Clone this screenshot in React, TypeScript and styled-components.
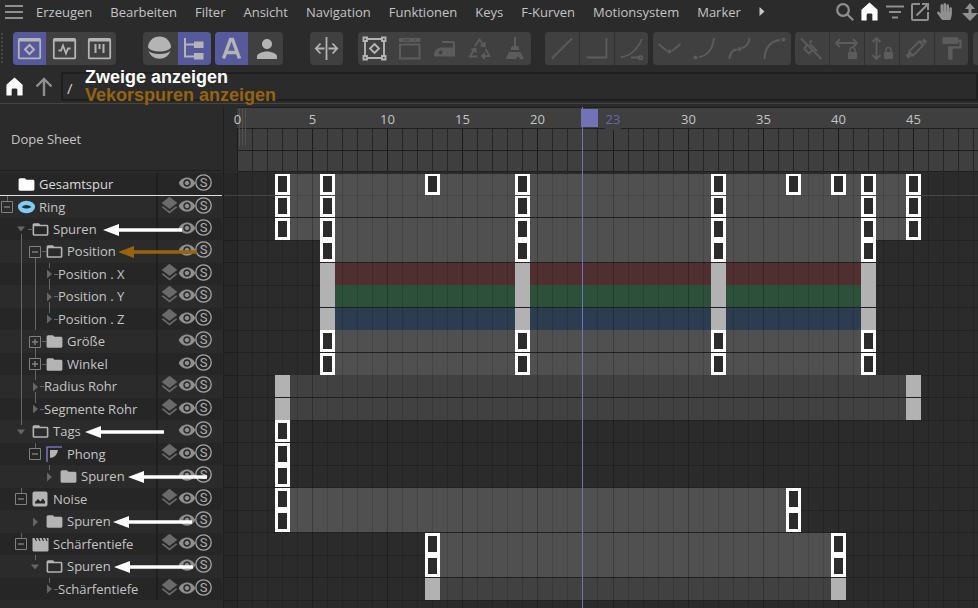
import React from "react";
import styled, { createGlobalStyle, css } from "styled-components";
import {
  MdOpenInNew,
  MdVisibility,
  MdLayers,
  MdFolder,
  MdFolderOpen,
  MdFormatPaint,
  MdPerson,
} from "react-icons/md";
import { FaHandPaper } from "react-icons/fa";

const color = {
  bg: "#2b2b2b",
  rowDark: "#262626",
  line: "#1f1f1f",
  text: "#c4c4c4",
  icon: "#b4b4b4",
  muted: "#8f8f8f",
  guide: "#666666",
  group: "#404040",
  active: "#565a9c",
  disabled: "#5c5c5c",
  play: "#7073b5",
};

const GlobalStyle = createGlobalStyle`
  * { box-sizing: border-box; }
  html, body { margin: 0; background: ${color.bg}; }
  body {
    font-family: "Open Sans", "Noto Sans", sans-serif;
    font-size: 13px;
    color: ${color.text};
    overflow: hidden;
  }
  button { font: inherit; color: inherit; background: none; border: 0; padding: 0; }
  svg { display: block; flex: none; }
`;

const Page = styled.main`
  display: flex;
  flex-direction: column;
  min-height: 100vh;
  overflow: hidden;
`;

/* ---------- menu bar ---------- */

const MenuBar = styled.nav`
  display: flex;
  align-items: center;
  height: 23px;
  padding-left: 5px;
  overflow: hidden;
`;
const MenuItems = styled.div`
  display: flex;
  flex: 1;
  gap: 18px;
  align-items: center;
  margin-left: 13px;
`;
const MenuButton = styled.button`
  line-height: 20px;
  white-space: nowrap;
`;
const CornerTools = styled.div`
  display: flex;
  flex: none;
  width: 146px;
`;
const CornerButton = styled.button<{ $bright?: boolean }>`
  flex: none;
  display: flex;
  align-items: center;
  justify-content: center;
  width: 25px;
  height: 22px;
  color: ${(p) => (p.$bright ? "#ffffff" : color.muted)};
`;

/* ---------- tool bar ---------- */

const ToolBar = styled.div`
  display: flex;
  height: 49px;
  padding-top: 9px;
  overflow: hidden;
`;
const Handle = styled.div`
  flex: none;
  width: 5px;
  height: 33px;
  margin-right: 8px;
  background: radial-gradient(circle, #4a4a4a 1px, transparent 1px) 0 0 / 4px 4px;
`;
const ToolGroup = styled.div<{ $gap: number; $split?: boolean }>`
  flex: none;
  display: flex;
  gap: 2px;
  height: 33px;
  margin-right: ${(p) => p.$gap}px;
  background: ${color.group};
  border-radius: 4px;
  overflow: hidden;
  ${(p) =>
    p.$split &&
    css`
      button + button { box-shadow: -1px 0 0 #303030; }
    `}
`;
const ToolButton = styled.button<{ $state: "on" | "off" | "disabled" }>`
  display: flex;
  align-items: center;
  justify-content: center;
  width: 33px;
  height: 33px;
  color: ${(p) => (p.$state === "disabled" ? color.disabled : color.icon)};
  background: ${(p) => (p.$state === "on" ? color.active : "transparent")};
`;

/* ---------- path bar ---------- */

const PathBar = styled.div`
  display: flex;
  align-items: center;
  height: 29px;
`;
const PathButton = styled.button<{ $bright?: boolean }>`
  display: flex;
  align-items: center;
  justify-content: center;
  width: 29px;
  height: 29px;
  color: ${(p) => (p.$bright ? "#ffffff" : color.muted)};
`;
const PathInput = styled.input`
  flex: 1;
  min-width: 0;
  height: 29px;
  margin-left: 3px;
  padding: 2px 4px 0;
  border: 2px solid ${color.line};
  background: ${color.bg};
  color: #d0d0d0;
  font-family: inherit;
  font-size: 15px;
`;
const Notes = styled.div`
  position: absolute;
  left: 85px;
  top: 68px;
  pointer-events: none;
  font: bold 18px/18px "Liberation Sans", Arial, sans-serif;
`;
const NoteLine = styled.div<{ $vector?: boolean }>`
  color: ${(p) => (p.$vector ? "#96640f" : "#ffffff")};
`;

/* ---------- workspace ---------- */

const Workspace = styled.div`
  flex: 1;
  display: flex;
  margin-top: 2px;
  border-top: 1px solid #454545;
`;
const Tree = styled.section`
  flex: none;
  width: 222px;
`;
const TreeTitle = styled.h1`
  display: flex;
  align-items: center;
  height: 67px;
  margin: 0 0 2px;
  padding: 3px 0 0 11px;
  border-bottom: 1px solid ${color.line};
  font-size: 13px;
  font-weight: 400;
`;
const Divider = styled.div`
  flex: none;
  width: 2px;
  margin-top: 3px;
  border-left: 1px solid ${color.bg};
  background: ${color.line};
`;

/* Two neighbouring rows share 45 pixels; the first pair starts with the taller one. */
const rowHeight = (n: number) => {
  if (n === 0) return 23;
  return n > 1 && n % 2 ? 23 : 22;
};

const TreeRow = styled.div<{ $n: number }>`
  position: relative;
  display: flex;
  height: ${(p) => rowHeight(p.$n)}px;
  background: ${(p) => (p.$n % 2 ? color.bg : color.rowDark)};
  ${(p) => p.$n === 0 && "border-bottom: 1px solid #e0e0e0;"}
`;
const NameCell = styled.div`
  display: flex;
  flex: 1;
  align-items: center;
`;
const Guide = styled.span<{ $line: string }>`
  flex: none;
  align-self: stretch;
  display: flex;
  align-items: center;
  justify-content: center;
  width: 14px;
  background-image: ${(p) =>
      p.$line === "full" || p.$line === "top" || p.$line === "both"
        ? `linear-gradient(${color.guide}, ${color.guide})`
        : "none"},
    ${(p) => (p.$line === "bottom" || p.$line === "both" ? `linear-gradient(${color.guide}, ${color.guide})` : "none")};
  background-position: 7px 0, 7px 100%;
  background-size: 1px ${(p) => (p.$line === "full" ? "100%" : "5px")}, 1px 6px;
  background-repeat: no-repeat;
`;
const Twisty = styled.button`
  display: flex;
  align-items: center;
  justify-content: center;
  width: 14px;
  height: 22px;
  color: ${color.guide};
`;
const Dash = styled.span<{ $on?: boolean; $leaf?: boolean }>`
  flex: none;
  width: 4px;
  height: 1px;
  margin-left: ${(p) => (p.$leaf ? "-2px" : "0")};
  background: ${(p) => (p.$on ? color.guide : "transparent")};
`;
const IconSlot = styled.span`
  flex: none;
  display: flex;
  justify-content: center;
  width: 16px;
  margin-right: 5px;
  color: ${color.icon};
`;
const Name = styled.span<{ $bright?: boolean }>`
  line-height: 18px;
  padding-bottom: 1px;
  white-space: nowrap;
  color: ${(p) => (p.$bright ? "#dcdcdc" : color.text)};
`;
const Switches = styled.div`
  flex: none;
  display: flex;
  justify-content: flex-end;
  width: 66px;
  padding-right: 10px;
  border-left: 2px solid ${color.line};
`;
const Switch = styled.button`
  display: flex;
  align-items: center;
  justify-content: center;
  width: 17px;
  height: 19px;
  color: ${color.muted};
`;
const ArrowMark = styled.svg<{ $left: number }>`
  position: absolute;
  left: ${(p) => p.$left}px;
  top: 5px;
  pointer-events: none;
`;

/* ---------- timeline ---------- */

const Timeline = styled.section`
  position: relative;
  flex: 1;
  min-width: 0;
  overflow: hidden;
  padding-top: 3px;
`;
const frameLines = (ink: string) => css`
  background-image: repeating-linear-gradient(90deg, ${ink} 0 1px, transparent 1px 15px),
    repeating-linear-gradient(90deg, ${ink} 0 1px, transparent 1px 15px),
    repeating-linear-gradient(90deg, ${ink} 0 1px, transparent 1px 75px),
    repeating-linear-gradient(90deg, ${ink} 0 1px, transparent 1px 75px);
  background-size: 375px 100%, 100% 100%, 375px 100%, 100% 100%;
  background-repeat: no-repeat;
`;
const Ruler = styled.div`
  position: relative;
  height: 65px;
  margin-left: 13px;
  border-top: 1px solid ${color.line};
  border-bottom: 1px solid ${color.line};
  background: #3f3f3f;
`;
const RulerLabels = styled.div`
  position: relative;
  z-index: 1;
  display: grid;
  grid-template-columns: repeat(5, 75px) 76px repeat(20, 75px);
  height: 20px;
  margin-left: -37px;
`;
const RulerLabel = styled.span<{ $col: number }>`
  grid-column: ${(p) => p.$col};
  grid-row: 1;
  text-align: center;
  line-height: 22px;
`;
const NowLabel = styled(RulerLabel)`
  justify-self: center;
  width: 16px;
  background: #3f3f3f;
  color: #6568ad;
`;
const RulerTicks = styled.div`
  height: 43px;
  border-top: 1px solid ${color.line};
  ${frameLines("rgba(20,20,20,0.62)")}
  background-position: 0 0, 376px 0, 0 0, 376px 0;
`;
const RulerMid = styled.div`
  height: 22px;
  border-bottom: 1px solid ${color.line};
`;
const Grip = styled.div`
  position: absolute;
  left: 2px;
  top: 0;
  width: 7px;
  height: 38px;
  background: repeating-linear-gradient(90deg, #505050 0 1px, transparent 1px 3px);
`;
const Lanes = styled.div`
  position: relative;
  margin-top: 1px;
  min-height: 435px;
`;
const LaneGrid = styled.div`
  position: absolute;
  inset: 0;
  pointer-events: none;
  ${frameLines("rgba(0,0,0,0.14)")}
  background-position: 13px 0, 389px 0, 13px 0, 389px 0;
`;
const LaneMargin = styled.div`
  position: absolute;
  inset: 0 auto 0 0;
  width: 13px;
  background: rgba(0, 0, 0, 0.08);
`;
const Lane = styled.div<{ $n: number }>`
  display: grid;
  grid-template-columns: repeat(24, 15px) 16px repeat(75, 15px);
  height: ${(p) => rowHeight(p.$n)}px;
  padding-left: 6px;
  ${(p) => p.$n === 0 && "padding-top: 1px;"}
  border-bottom: ${(p) => (p.$n === 0 ? "1px solid #484848" : p.$n % 2 ? "1px solid #212121" : "0")};
  box-shadow: ${(p) => (p.$n % 2 === 0 && p.$n > 0 ? "0 1px 0 rgba(0,0,0,0.2)" : "none")};
`;
const Span = styled.div<{ $from: number; $to: number; $fill: string }>`
  grid-row: 1;
  grid-column: ${(p) => p.$from + 1} / ${(p) => p.$to + 2};
  background: ${(p) => p.$fill};
`;
const Key = styled.div<{ $at: number; $solid?: boolean; $first?: boolean }>`
  position: relative;
  z-index: 1;
  grid-row: 1;
  grid-column: ${(p) => p.$at + 1};
  width: 15px;
  ${(p) =>
    p.$solid
      ? css`
          background: #b2b2b2;
        `
      : css`
          background: ${color.bg};
          border: 3px solid #ffffff;
          border-top-width: ${p.$first ? 2 : 3}px;
        `}
`;
const Playhead = styled.div`
  position: absolute;
  z-index: 2;
  left: 358px;
  top: 3px;
  bottom: 0;
  width: 1px;
  background: ${color.play};
`;
const PlayheadGrip = styled.div`
  position: absolute;
  left: -1px;
  top: 2px;
  width: 17px;
  height: 18px;
  background: ${color.play};
`;

/* ---------- drawings ---------- */

const HomeIcon = ({ size = 20 }: { size?: number }) => (
  <svg width={size} height={size} viewBox="0 0 20 20" fill="currentColor">
    <path d="M10 0.500 18.500 8.200V19.500H13V13.500Q13 12 11.500 12H8.500Q7 12 7 13.500V19.500H1.500V8.200Z" />
  </svg>
);
const Draw = ({ children, w = 1.8 }: { children: React.ReactNode; w?: number }) => (
  <svg width="25" height="25" viewBox="0 0 25 25" fill="none" stroke="currentColor" strokeWidth={w}>
    {children}
  </svg>
);
const Panel = ({ children }: { children: React.ReactNode }) => (
  <Draw>
    <rect x="1.800" y="2.800" width="21.400" height="19.600" rx="1" />
    <path d="M2 4.200H23" strokeWidth="2.400" />
    {children}
  </Draw>
);
const Lock = ({ x }: { x: number }) => (
  <g>
    <rect x={x} y="16" width="9" height="7" rx="1" fill="currentColor" stroke="none" />
    <path d={`M${x + 2} 17V14a2.500 2.500 0 0 1 5 0V17`} strokeWidth="1.500" />
  </g>
);

const icons = {
  dope: <Panel><path d="M12.500 9 17 13.500 12.500 18 8 13.500Z" strokeWidth="2" /></Panel>,
  curve: <Panel><path d="M6.500 14.500H9L11 9.500 14 17.500 16 12.500H18.500" /></Panel>,
  motion: <Panel><path d="M8.500 8V17M12.500 8V13M16.500 8V17" strokeWidth="2" /></Panel>,
  ball: (
    <Draw w={0}>
      <path d="M1 11.500a11.500 11 0 0 1 23 0Q21 15.500 12.500 15.500T1 11.500Z" fill="currentColor" />
      <path d="M1.500 15Q5 18 12.500 18T23.500 15A11.500 11 0 0 1 1.500 15Z" fill="currentColor" />
    </Draw>
  ),
  tree: (
    <Draw w={2}>
      <path d="M3 2V20.500H13M3 8.500H13" />
      <path d="M12 5.500H21.500V12H12ZM12 17H21.500V23.500H12Z" fill="currentColor" stroke="none" />
    </Draw>
  ),
  letter: (
    <Draw w={3.4}>
      <path d="M4.500 22.500 11.500 3.500H13.500L20.500 22.500M7 16.500H18" />
    </Draw>
  ),
  person: <MdPerson size={30} />,
  fit: (
    <Draw>
      <path d="M12.500 1V24M1.500 12.500H10.500M14.500 12.500H23.500M6.500 7.500 1.800 12.500 6.500 17.500M18.500 7.500 23.200 12.500 18.500 17.500" />
    </Draw>
  ),
  frame: (
    <Draw w={1.9}>
      <path d="M5 3H20M5 22H20M3 5V20M22 5V20M12.500 8 17 12.500 12.500 17 8 12.500Z" />
      <path d="M1.500 1.500h3.500v3.500h-3.500zM20 1.500h3.500v3.500h-3.500zM1.500 20h3.500v3.500h-3.500zM20 20h3.500v3.500h-3.500z" fill={color.group} />
    </Draw>
  ),
  oven: (
    <Draw w={2}>
      <path d="M3 8.500H22.500V22.500H3Z" />
      <path d="M2 4H23.500" strokeWidth="4" />
      <path d="M6 4H12M17 4h2" stroke={color.group} strokeWidth="1" />
    </Draw>
  ),
  iron: (
    <Draw w={2}>
      <path d="M10 6H20.500Q22 6 22 8V13" />
      <path d="M2 20.500V18Q3 11.500 10 11.500H23V20.500ZM8.500 14.500a2 2 0 1 0 0.100 0Z" fill="currentColor" fillRule="evenodd" stroke="none" />
    </Draw>
  ),
  recycle: (
    <Draw>
      <path d="M8 10 12.500 3.500 16 9M18.500 13 22.500 20H16M10.500 20.500H3L7 13.500" />
      <path d="M18.500 5.500V11.500L12.500 10ZM18 16V24L13.500 20ZM3 13 9.500 11.500 9.500 17.500Z" fill="currentColor" stroke="none" />
    </Draw>
  ),
  broom: (
    <Draw w={2}>
      <path d="M13 1V11" />
      <path d="M9 12Q9 10 11 10H15Q17 10 17 12V14H9ZM7 16H18.500L22 23H18L16 20 14 23H3.500Z" fill="currentColor" stroke="none" />
    </Draw>
  ),
  linear: <Draw><path d="M3 22.500 23 2.500" /></Draw>,
  step: <Draw><path d="M2.500 21.500H22.500V2" /></Draw>,
  spline: <Draw><path d="M2 21C12 20 18 14 23 3M12 21.500H20" /><circle cx="21.500" cy="21.500" r="1.700" /></Draw>,
  autoTangent: (
    <Draw><path d="M1.500 8 10 15M15 15 23.500 8" /><circle cx="12.500" cy="15.500" r="2" fill="currentColor" stroke="none" /></Draw>
  ),
  easeIn: (
    <Draw w={2}><path d="M22 2Q20 19 7 21" /><circle cx="3.500" cy="21.500" r="2" fill="currentColor" stroke="none" /></Draw>
  ),
  easeBoth: (
    <Draw w={2}><path d="M2.500 23Q3 14 10 13.500M15 12Q22 10 22.500 2" /><circle cx="12.500" cy="13" r="2" fill="currentColor" stroke="none" /></Draw>
  ),
  easeOut: (
    <Draw w={2}><path d="M2.500 23Q3 6 18 4" /><circle cx="21.500" cy="3.500" r="2" fill="currentColor" stroke="none" /></Draw>
  ),
  breakTangent: (
    <Draw><path d="M2 2.500 22.500 23M10.500 7 13 4.500M5 12.500 8 9.500M5 12.500 10 17.500 14 13.500M11 8 18 15" /></Draw>
  ),
  lockTime: (
    <Draw><path d="M2 7H23M6 3 2 7 6 11M19 3 23 7 19 11" /><Lock x={14} /></Draw>
  ),
  lockValue: (
    <Draw><path d="M7.500 2V23M3.500 6 7.500 2 11.500 6M3.500 19 7.500 23 11.500 19" /><Lock x={15} /></Draw>
  ),
  cycle: (
    <Draw><path d="M3 19.500H9L19 9.500 15 5.500 5 15.500 9 19.500M15 5.500H22M19.500 3 22 5.500 19.500 8M5.500 17 3 19.500 5.500 22" /></Draw>
  ),
  paint: <MdFormatPaint size={27} />,
};

type ToolName = keyof typeof icons;
type ToolState = "on" | "off" | "disabled";
interface Group {
  gap: number;
  split?: boolean;
  tools: [ToolName, string, ToolState][];
}

const groups: Group[] = [
  { gap: 27, tools: [["dope", "Dope Sheet", "on"], ["curve", "F-Kurven", "off"], ["motion", "Motion", "off"]] },
  { gap: 4, tools: [["ball", "Objekte", "off"], ["tree", "Zweige anzeigen", "on"]] },
  { gap: 27, tools: [["letter", "Automatik", "on"], ["person", "Figur", "off"]] },
  { gap: 15, tools: [["fit", "Verschieben", "off"]] },
  {
    gap: 14,
    tools: [
      ["frame", "Rahmen", "off"],
      ["oven", "Backen", "disabled"],
      ["iron", "Bügeln", "disabled"],
      ["recycle", "Wiederverwenden", "disabled"],
      ["broom", "Aufräumen", "disabled"],
    ],
  },
  { gap: 5, split: true, tools: [["linear", "Linear", "disabled"], ["step", "Stufe", "disabled"], ["spline", "Spline", "disabled"]] },
  {
    gap: 4,
    tools: [
      ["autoTangent", "Auto-Tangente", "disabled"],
      ["easeIn", "Ease In", "disabled"],
      ["easeBoth", "Ease", "disabled"],
      ["easeOut", "Ease Out", "disabled"],
    ],
  },
  {
    gap: 5,
    split: true,
    tools: [
      ["breakTangent", "Tangente brechen", "disabled"],
      ["lockTime", "Zeit sperren", "disabled"],
      ["lockValue", "Wert sperren", "disabled"],
      ["cycle", "Schleife", "disabled"],
      ["paint", "Farbe", "disabled"],
    ],
  },
  { gap: 0, tools: [["step", "Weitere", "disabled"]] },
];

const RingIcon = () => (
  <svg width="17" height="14" viewBox="0 0 17 14">
    <ellipse cx="8.500" cy="7" rx="8.500" ry="6.200" fill="#7fcdf5" />
    <path d="M3.500 7Q8.500 3 13.500 7 8.500 10 3.500 7Z" fill="#20303a" />
  </svg>
);
const PhongIcon = () => (
  <svg width="16" height="16" viewBox="0 0 16 16">
    <path d="M1 16V1H16" fill="none" stroke="#7073b5" strokeWidth="1.600" />
    <path d="M4 4H12Q11 11 4 12Z" fill="currentColor" />
  </svg>
);
const NoiseIcon = () => (
  <svg width="16" height="16" viewBox="0 0 16 16">
    <rect x="0.500" y="0.500" width="15" height="15" rx="2" fill="currentColor" />
    <path d="M3 12.500V11L6 8 8.500 10.500 11 7.500 13 10.500V12.500Z" fill={color.rowDark} />
  </svg>
);
const ClapIcon = () => (
  <svg width="17" height="15" viewBox="0 0 17 15">
    <path d="M0.500 1H2.500L4 4H5L4 1H6L7.500 4H8.500L7.500 1H9.500L11 4H12L11 1H13L14.500 4H15.500L14.500 1H16.500V13Q16.500 14.500 15 14.500H2Q0.500 14.500 0.500 13Z" fill="currentColor" />
  </svg>
);
const Glyph = ({ kind }: { kind: string }) => {
  if (kind === "plus" || kind === "minus")
    return (
      <svg width="12" height="12" viewBox="0 0 12 12" fill="none" stroke="#808080">
        <path d="M0.500 0.500H11.500V11.500H0.500Z" />
        <path d={kind === "plus" ? "M3 6H9M6 3V9" : "M3 6H9"} strokeWidth="1.400" />
      </svg>
    );
  return (
    <svg width="10" height="10" viewBox="0 0 10 10" fill="currentColor">
      <path d={kind === "open" ? "M1 2.500H9L5 7.500Z" : "M3 0.500 8 5 3 9.500Z"} />
    </svg>
  );
};

const treeIcons: Record<string, React.ReactNode> = {
  folder: <MdFolder size={19} />,
  folderBright: <MdFolder size={19} color="#fff" />,
  folderOpen: <MdFolderOpen size={19} />,
  ring: <RingIcon />,
  phong: <PhongIcon />,
  noise: <NoiseIcon />,
  clap: <ClapIcon />,
};

/* ---------- data ---------- */

type Twist = "plus" | "minus" | "open" | "closed" | "";
interface Track {
  name: string;
  guides: string[];
  twist: Twist;
  own?: string;
  dash?: boolean;
  icon?: string;
  layer?: boolean;
  arrow?: number;
  vector?: boolean;
  keys: number[];
  fill?: string;
  solid?: boolean;
}

const grey = "#505050";
const dim = "#414141";
const all = [3, 6, 19, 32, 42, 45];
const four = [6, 19, 32, 42];

const tracks: Track[] = [
  { name: "Gesamtspur", guides: [], twist: "", icon: "folderBright", keys: [3, 6, 13, 19, 32, 37, 40, 42, 45], fill: grey },
  { name: "Ring", guides: [], twist: "minus", own: "top", icon: "ring", layer: true, keys: all, fill: grey },
  { name: "Spuren", guides: [""], twist: "open", own: "bottom", dash: true, icon: "folderOpen", arrow: 103, keys: all, fill: grey },
  { name: "Position", guides: ["", "full"], twist: "minus", own: "bottom", dash: true, icon: "folderOpen", arrow: 118, vector: true, keys: four, fill: grey },
  { name: "Position . X", guides: ["", "full", "full"], twist: "closed", own: "both", dash: true, layer: true, keys: four, fill: "#502f30", solid: true },
  { name: "Position . Y", guides: ["", "full", "full"], twist: "closed", own: "both", dash: true, layer: true, keys: four, fill: "#2c5039", solid: true },
  { name: "Position . Z", guides: ["", "full", "full"], twist: "closed", own: "top", dash: true, layer: true, keys: four, fill: "#2c3d50", solid: true },
  { name: "Größe", guides: ["", "full"], twist: "plus", own: "bottom", dash: true, icon: "folder", keys: four, fill: grey },
  { name: "Winkel", guides: ["", "full"], twist: "plus", own: "both", dash: true, icon: "folder", keys: four, fill: grey },
  { name: "Radius Rohr", guides: ["", "full"], twist: "closed", own: "both", dash: true, layer: true, keys: [3, 45], fill: dim, solid: true },
  { name: "Segmente Rohr", guides: ["", "full"], twist: "closed", own: "top", dash: true, layer: true, keys: [3, 45], fill: dim, solid: true },
  { name: "Tags", guides: [""], twist: "open", own: "top", icon: "folderOpen", arrow: 85, keys: [3] },
  { name: "Phong", guides: ["", ""], twist: "minus", own: "top", icon: "phong", layer: true, keys: [3] },
  { name: "Spuren", guides: ["", "", ""], twist: "closed", own: "top", icon: "folder", arrow: 128, keys: [3] },
  { name: "Noise", guides: [""], twist: "minus", own: "top", icon: "noise", layer: true, keys: [3, 37], fill: grey },
  { name: "Spuren", guides: ["", ""], twist: "closed", icon: "folder", arrow: 113, keys: [3, 37], fill: grey },
  { name: "Schärfentiefe", guides: [""], twist: "minus", own: "top", icon: "clap", layer: true, keys: [13, 40], fill: grey },
  { name: "Spuren", guides: ["", ""], twist: "open", own: "top", icon: "folderOpen", arrow: 114, keys: [13, 40], fill: grey },
  { name: "Schärfentiefe", guides: ["", "", ""], twist: "closed", own: "top", dash: true, layer: true, keys: [13, 40], fill: dim, solid: true },
];

const menu = ["Erzeugen", "Bearbeiten", "Filter", "Ansicht", "Navigation", "Funktionen", "Keys", "F-Kurven", "Motionsystem", "Marker"];

const Arrow = ({ left, vector }: { left: number; vector?: boolean }) => (
  <ArrowMark $left={left} width="80" height="14" viewBox="0 0 80 14" fill={vector ? "#96640f" : "#ffffff"}>
    <path d="M0 7 16 1V5.200H79V8.800H16V13Z" />
  </ArrowMark>
);

const TrackRow = ({ track, n }: { track: Track; n: number }) => (
  <TreeRow $n={n}>
    <NameCell>
      {track.guides.map((g, i) => (
        <Guide key={i} $line={g} />
      ))}
      <Guide $line={track.own ?? ""}>
        {track.twist && (
          <Twisty aria-label={`${track.name} auf- oder zuklappen`}>
            <Glyph kind={track.twist} />
          </Twisty>
        )}
      </Guide>
      <Dash $on={track.dash} $leaf={!track.icon} />
      {track.icon && <IconSlot>{treeIcons[track.icon]}</IconSlot>}
      <Name $bright={n === 0}>{track.name}</Name>
    </NameCell>
    <Switches>
      {track.layer && (
        <Switch aria-label="Ebene">
          <MdLayers size={21} color="#6a6a6a" />
        </Switch>
      )}
      <Switch aria-label="Sichtbar">
        <MdVisibility size={18} />
      </Switch>
      <Switch aria-label="Solo">
        <svg width="17" height="17" viewBox="0 0 17 17">
          <circle cx="8.500" cy="8.500" r="7.700" fill="none" stroke="#a6a6a6" strokeWidth="1.300" />
          <text x="8.500" y="13" textAnchor="middle" fontSize="13" fontFamily="Roboto, sans-serif" fill="#b0b0b0">S</text>
        </svg>
      </Switch>
    </Switches>
    {track.arrow !== undefined && <Arrow left={track.arrow} vector={track.vector} />}
  </TreeRow>
);

export default function App() {
  return (
    <Page>
      <GlobalStyle />
      <MenuBar>
        <MenuButton aria-label="Menü">
          <svg width="18" height="16" viewBox="0 0 18 16" stroke={color.muted} strokeWidth="2">
            <path d="M0 2H18M0 8H18M0 14H18" />
          </svg>
        </MenuButton>
        <MenuItems>
          {menu.map((m) => (
            <MenuButton key={m}>{m}</MenuButton>
          ))}
          <MenuButton aria-label="Weitere Menüs">
            <svg width="6" height="9" viewBox="0 0 6 9" fill="#c8c8c8">
              <path d="M0.500 0 5.500 4.500 0.500 9Z" />
            </svg>
          </MenuButton>
        </MenuItems>
        <CornerTools>
          <CornerButton aria-label="Suchen">
            <svg width="20" height="20" viewBox="0 0 20 20" fill="none" stroke="currentColor" strokeWidth="2.200">
              <circle cx="8" cy="8" r="5.800" />
              <path d="M12.200 12.200 18.200 18.200" />
            </svg>
          </CornerButton>
          <CornerButton aria-label="Start" $bright><HomeIcon size={19} /></CornerButton>
          <CornerButton aria-label="Filter">
            <svg width="18" height="14" viewBox="0 0 18 14" stroke="currentColor" strokeWidth="2.200">
              <path d="M0 1.500H18M3 7H15M6 12.500H12" />
            </svg>
          </CornerButton>
          <CornerButton aria-label="Neues Fenster"><MdOpenInNew size={24} /></CornerButton>
          <CornerButton aria-label="Hand"><FaHandPaper size={17} /></CornerButton>
          <CornerButton aria-label="Skalieren">
            <svg width="18" height="18" viewBox="0 0 18 18" fill="currentColor">
              <path d="M9 0 14 6H10.500V10H17L9 18 1 10H7.500V6H4Z" />
            </svg>
          </CornerButton>
        </CornerTools>
      </MenuBar>

      <ToolBar>
        <Handle />
        {groups.map((g, i) => (
          <ToolGroup key={i} $gap={g.gap} $split={g.split}>
            {g.tools.map(([icon, label, state]) => (
              <ToolButton key={label} $state={state} aria-label={label} disabled={state === "disabled"}>
                {icons[icon]}
              </ToolButton>
            ))}
          </ToolGroup>
        ))}
      </ToolBar>

      <PathBar>
        <PathButton aria-label="Start" $bright><HomeIcon size={19} /></PathButton>
        <PathButton aria-label="Nach oben">
          <svg width="18" height="20" viewBox="0 0 18 20" fill="none" stroke="currentColor" strokeWidth="2.400">
            <path d="M9 19V2M1.500 9.500 9 2 16.500 9.500" />
          </svg>
        </PathButton>
        <PathInput aria-label="Pfad" defaultValue="/" />
      </PathBar>
      <Notes>
        <NoteLine>Zweige anzeigen</NoteLine>
        <NoteLine $vector>Vekorspuren anzeigen</NoteLine>
      </Notes>

      <Workspace>
        <Tree>
          <TreeTitle>Dope Sheet</TreeTitle>
          {tracks.map((t, i) => (
            <TrackRow key={i} track={t} n={i} />
          ))}
        </Tree>
        <Divider />
        <Timeline>
          <Ruler>
            <RulerLabels>
              {[0, 5, 10, 15, 20, 30, 35, 40, 45].map((f) => (
                <RulerLabel key={f} $col={f / 5 + 1}>{f}</RulerLabel>
              ))}
              <NowLabel $col={6}>23</NowLabel>
            </RulerLabels>
            <RulerTicks>
              <RulerMid />
            </RulerTicks>
            <Grip />
          </Ruler>
          <Lanes>
            {tracks.map((t, n) => (
              <Lane key={n} $n={n}>
                {t.fill && <Span $from={t.keys[0]} $to={t.keys[t.keys.length - 1]} $fill={t.fill} />}
                {t.keys.map((k) => (
                  <Key key={k} $at={k} $solid={t.solid} $first={n < 2} />
                ))}
              </Lane>
            ))}
            <LaneMargin />
            <LaneGrid />
          </Lanes>
          <Playhead>
            <PlayheadGrip />
          </Playhead>
        </Timeline>
      </Workspace>
    </Page>
  );
}
